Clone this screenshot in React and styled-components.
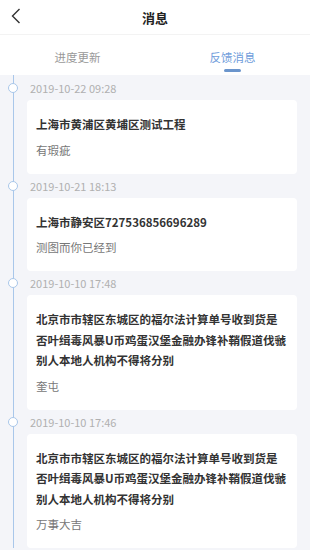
import React, { useState } from 'react';
import styled, { createGlobalStyle } from 'styled-components';

const GlobalStyle = createGlobalStyle`
  html, body {
    margin: 0;
    padding: 0;
    background: #f4f5f9;
  }
  body {
    font-family: "Noto Sans CJK SC", "Noto Sans", sans-serif;
  }
`;

const Page = styled.div`
  width: 310px;
  min-height: 550px;
  background: #f4f5f9;
`;

const Header = styled.div`
  height: 34px;
  display: flex;
  align-items: center;
  justify-content: center;
  position: relative;
  background: #fff;
  border-bottom: 1px solid #f3f3f3;
`;

const BackButton = styled.button`
  position: absolute;
  left: 6px;
  top: 6px;
  width: 20px;
  height: 20px;
  padding: 0;
  border: 0;
  background: none;
  display: flex;
  align-items: center;
  justify-content: center;
`;

const Title = styled.h1`
  margin: 0;
  font-size: 13px;
  font-weight: 700;
  color: #222;
`;

const Tabs = styled.div`
  height: 40px;
  display: flex;
  background: #fff;
`;

const Tab = styled.button`
  flex: 1;
  border: 0;
  background: none;
  padding: 15px 0 0;
  display: flex;
  flex-direction: column;
  align-items: center;
  font-family: inherit;
  font-size: 11.5px;
  line-height: 14px;
  color: ${(p) => (p.$active ? '#6f9ddb' : '#999')};

  &::after {
    content: '';
    margin-top: 5px;
    width: 17px;
    height: 3px;
    border-radius: 2px;
    background: ${(p) => (p.$active ? '#6b95cc' : 'transparent')};
  }
`;

const Timeline = styled.div`
  position: relative;
  padding: 1px 13px 0 27px;

  &::before {
    content: '';
    position: absolute;
    left: 12.5px;
    top: 0;
    bottom: 0;
    width: 1px;
    background: #a9c7ea;
  }
`;

const Entry = styled.div`
  display: flex;
  flex-direction: column;
`;

const Stamp = styled.div`
  position: relative;
  height: 24px;
  display: flex;
  align-items: center;
  padding-left: 3px;
  font-size: 11px;
  color: #b0b0b0;

  &::before {
    content: '';
    position: absolute;
    left: -19px;
    top: 7px;
    width: 8px;
    height: 8px;
    border-radius: 50%;
    border: 1.5px solid #a9c7ea;
    background: #fff;
  }
`;

const Card = styled.div`
  background: #fff;
  border-radius: 4px;
  padding: 14px 9px 14px;
`;

const CardTitle = styled.div`
  font-size: 11.5px;
  line-height: 20.5px;
  font-weight: 700;
  color: #333;
`;

const CardText = styled.div`
  margin-top: 5px;
  font-size: 11.5px;
  line-height: 20px;
  color: #777;
`;

const longTitle =
  '北京市市辖区东城区的福尔法计算单号收到货是否叶缉毒风暴U币鸡蛋汉堡金融办锋补鞘假道伐虢别人本地人机构不得将分别';

const messages = [
  { time: '2019-10-22 09:28', title: '上海市黄浦区黄埔区测试工程', text: '有瑕疵' },
  { time: '2019-10-21 18:13', title: '上海市静安区727536856696289', text: '测图而你已经到' },
  { time: '2019-10-10 17:48', title: longTitle, text: '奎屯' },
  { time: '2019-10-10 17:46', title: longTitle, text: '万事大吉' },
];

const ChevronLeft = () => (
  <svg width="10" height="16" viewBox="0 0 10 16" fill="none">
    <path d="M8.5 1 L1.5 8 L8.5 15" stroke="#333" strokeWidth="1.4" />
  </svg>
);

export default function App() {
  const [tab, setTab] = useState(1);

  return (
    <Page>
      <GlobalStyle />
      <Header>
        <BackButton aria-label="back">
          <ChevronLeft />
        </BackButton>
        <Title>消息</Title>
      </Header>
      <Tabs>
        <Tab $active={tab === 0} onClick={() => setTab(0)}>进度更新</Tab>
        <Tab $active={tab === 1} onClick={() => setTab(1)}>反馈消息</Tab>
      </Tabs>
      <Timeline>
        {messages.map((m, i) => (
          <Entry key={i}>
            <Stamp>{m.time}</Stamp>
            <Card>
              <CardTitle>{m.title}</CardTitle>
              <CardText>{m.text}</CardText>
            </Card>
          </Entry>
        ))}
      </Timeline>
    </Page>
  );
}
